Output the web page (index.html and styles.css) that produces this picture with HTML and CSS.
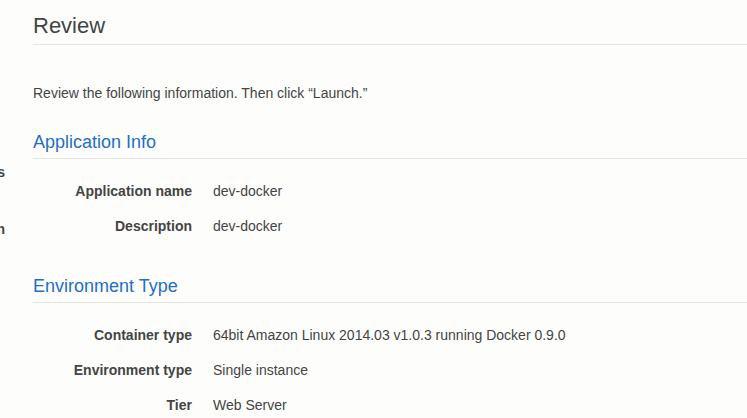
FILE: index.html
```html
<!DOCTYPE html>
<html lang="en">
<head>
    <meta charset="UTF-8">
    <meta name="viewport" content="width=device-width, initial-scale=1.0">
    <title>Review</title>
    <link rel="stylesheet" href="styles.css">
</head>
<body>

<div class="layout">
    <!-- левая панель, обрезана краем окна -->
    <div class="sidebar">
        <div class="side-item">Environment details</div>
        <div class="side-item">Configuration</div>
    </div>

    <div class="main">
        <h1>Review</h1>
        <p class="intro">Review the following information. Then click “Launch.”</p>

        <h2>Application Info</h2>
        <div class="info">
            <div class="label">Application name</div>
            <div class="value">dev-docker</div>
            <div class="label">Description</div>
            <div class="value">dev-docker</div>
        </div>

        <h2>Environment Type</h2>
        <div class="info">
            <div class="label">Container type</div>
            <div class="value">64bit Amazon Linux 2014.03 v1.0.3 running Docker 0.9.0</div>
            <div class="label">Environment type</div>
            <div class="value">Single instance</div>
            <div class="label">Tier</div>
            <div class="value">Web Server</div>
        </div>
    </div>
</div>

</body>
</html>
```

FILE: styles.css
```css
body {
    font-family: "Liberation Sans", Arial, sans-serif;
    background-color: #fdfefc;
    color: #444;
    margin: 0;
    padding: 0;
    overflow: hidden;
}
.layout {
    display: flex;
}
.sidebar {
    width: 5px;
    overflow: hidden;
    direction: rtl;
    padding-top: 164px;
    font-size: 14px;
    font-weight: bold;
    color: #444;
}
.side-item {
    white-space: nowrap;
    height: 16px;
    margin-bottom: 41px;
}
.main {
    flex: 1;
    padding: 13px 0 0 28px;
}
h1 {
    margin: 0;
    font-size: 22px;
    font-weight: normal;
    line-height: 26px;
    padding-bottom: 5px;
    border-bottom: 1px solid #e4e4e4;
    color: #444;
}
.intro {
    margin: 40px 0 0;
    font-size: 14px;
    line-height: 16px;
}
h2 {
    margin: 31px 0 0;
    font-size: 18px;
    font-weight: normal;
    line-height: 20px;
    padding-bottom: 6px;
    border-bottom: 1px solid #e4e4e4;
    color: #1f6fc6;
}
.info + h2 {
    margin-top: 33px;
}
.info {
    display: grid;
    grid-template-columns: 159px 1fr;
    column-gap: 21px;
    grid-auto-rows: 35px;
    align-items: center;
    margin-top: 14px;
    font-size: 14px;
}
.label {
    text-align: right;
    font-weight: bold;
}
```
